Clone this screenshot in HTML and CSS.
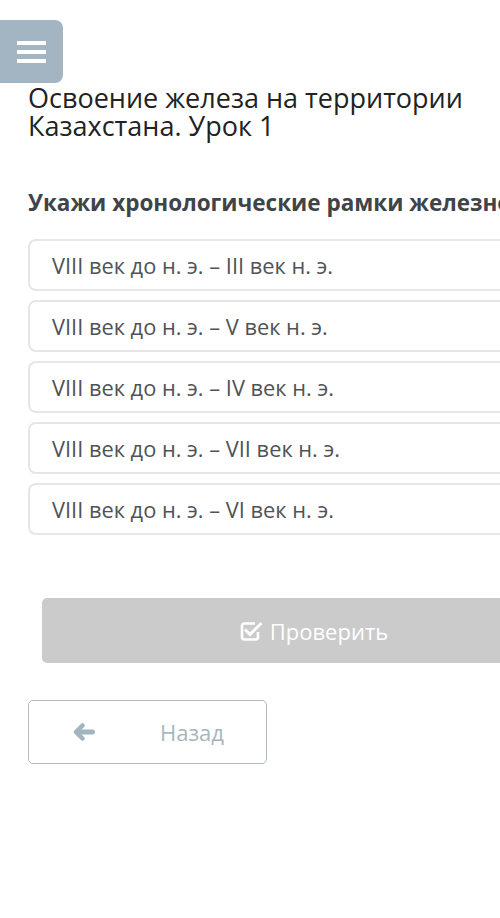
FILE: index.html
```html
<!DOCTYPE html>
<html lang="ru">
<head>
<meta charset="utf-8">
<link rel="stylesheet" href="styles.css">
</head>
<body>
<div class="page">
  <button class="menu-btn" aria-label="Меню">
    <span class="bar"></span><span class="bar"></span><span class="bar"></span>
  </button>
  <h1 class="title">Освоение железа на территории Казахстана. Урок 1</h1>
  <div class="content">
    <p class="question">Укажи хронологические рамки железного века.</p>
    <ul class="options">
      <li class="option">VIII век до н. э. – III век н. э.</li>
      <li class="option">VIII век до н. э. – V век н. э.</li>
      <li class="option">VIII век до н. э. – IV век н. э.</li>
      <li class="option">VIII век до н. э. – VII век н. э.</li>
      <li class="option">VIII век до н. э. – VI век н. э.</li>
    </ul>
    <button class="check-btn">
      <svg class="check-icon" width="22" height="20" viewBox="0 0 22 20">
        <path d="M15 2.5H4.5A2.5 2.5 0 0 0 2 5v11a2.5 2.5 0 0 0 2.5 2.5h11A2.5 2.5 0 0 0 18 16v-5" fill="none" stroke="#fff" stroke-width="2.6"/>
        <path d="M6 9.5l4 4L20.5 3" fill="none" stroke="#fff" stroke-width="3" stroke-linecap="square"/>
      </svg>
      <span>Проверить</span>
    </button>
    <button class="back-btn">
      <span class="back-arrow">
        <svg width="22" height="18" viewBox="0 0 22 18">
          <path d="M9.5 2.5L3 9l6.5 6.5" fill="none" stroke="#a2b4c0" stroke-width="4.5" stroke-linecap="round" stroke-linejoin="round"/>
          <path d="M4 9h15.5" fill="none" stroke="#a2b4c0" stroke-width="5" stroke-linecap="round"/>
        </svg>
      </span>
      <span class="back-text">Назад</span>
    </button>
  </div>
</div>
</body>
</html>
```
FILE: styles.css
```css
html, body {
  margin: 0;
  padding: 0;
  overflow: hidden;
  background: #fff;
}
body {
  font-family: "Open Sans", "Noto Sans", sans-serif;
  width: 500px;
  height: 918px;
}
.page {
  padding-top: 20px;
}
.menu-btn {
  display: flex;
  flex-direction: column;
  justify-content: center;
  align-items: center;
  gap: 5px;
  width: 63px;
  height: 63px;
  padding: 0;
  border: none;
  border-radius: 0 8px 8px 0;
  background: #a3b5c3;
}
.bar {
  display: block;
  width: 29px;
  height: 4px;
  background: #fff;
}
.title {
  margin: 1px 0 0 28px;
  width: 465px;
  font-size: 27px;
  font-weight: 400;
  line-height: 28px;
  color: #222;
}
.content {
  margin-left: 28px;
  width: 572px;
}
.question {
  margin: 51px 0 0 0;
  font-size: 22.5px;
  font-weight: 700;
  line-height: 24px;
  color: #3f4448;
  white-space: nowrap;
}
.options {
  list-style: none;
  margin: 24px 0 0 0;
  padding: 0;
  display: flex;
  flex-direction: column;
  gap: 9px;
}
.option {
  box-sizing: border-box;
  height: 52px;
  display: flex;
  align-items: center;
  padding-left: 22px;
  border: 2px solid #e6e6e6;
  border-radius: 8px;
  font-size: 21.8px;
  color: #505356;
}
.check-btn {
  display: flex;
  align-items: center;
  justify-content: center;
  gap: 8px;
  box-sizing: border-box;
  width: 544px;
  height: 65px;
  margin: 63px 14px 0 14px;
  border: none;
  border-radius: 5px;
  background: #cbcbcb;
  color: #fff;
  font-family: "Open Sans", "Noto Sans", sans-serif;
  font-size: 22px;
}
.check-icon {
  margin-top: 1px;
}
.back-btn {
  display: flex;
  align-items: center;
  box-sizing: border-box;
  width: 239px;
  height: 64px;
  margin-top: 37px;
  padding: 0;
  border: 1.5px solid #aebbc4;
  border-radius: 5px;
  background: #fff;
  font-family: "Open Sans", "Noto Sans", sans-serif;
}
.back-arrow {
  display: flex;
  width: 22px;
  margin-left: 44px;
}
.back-text {
  margin-left: 65px;
  font-size: 22px;
  color: #a9b5bd;
}
```
